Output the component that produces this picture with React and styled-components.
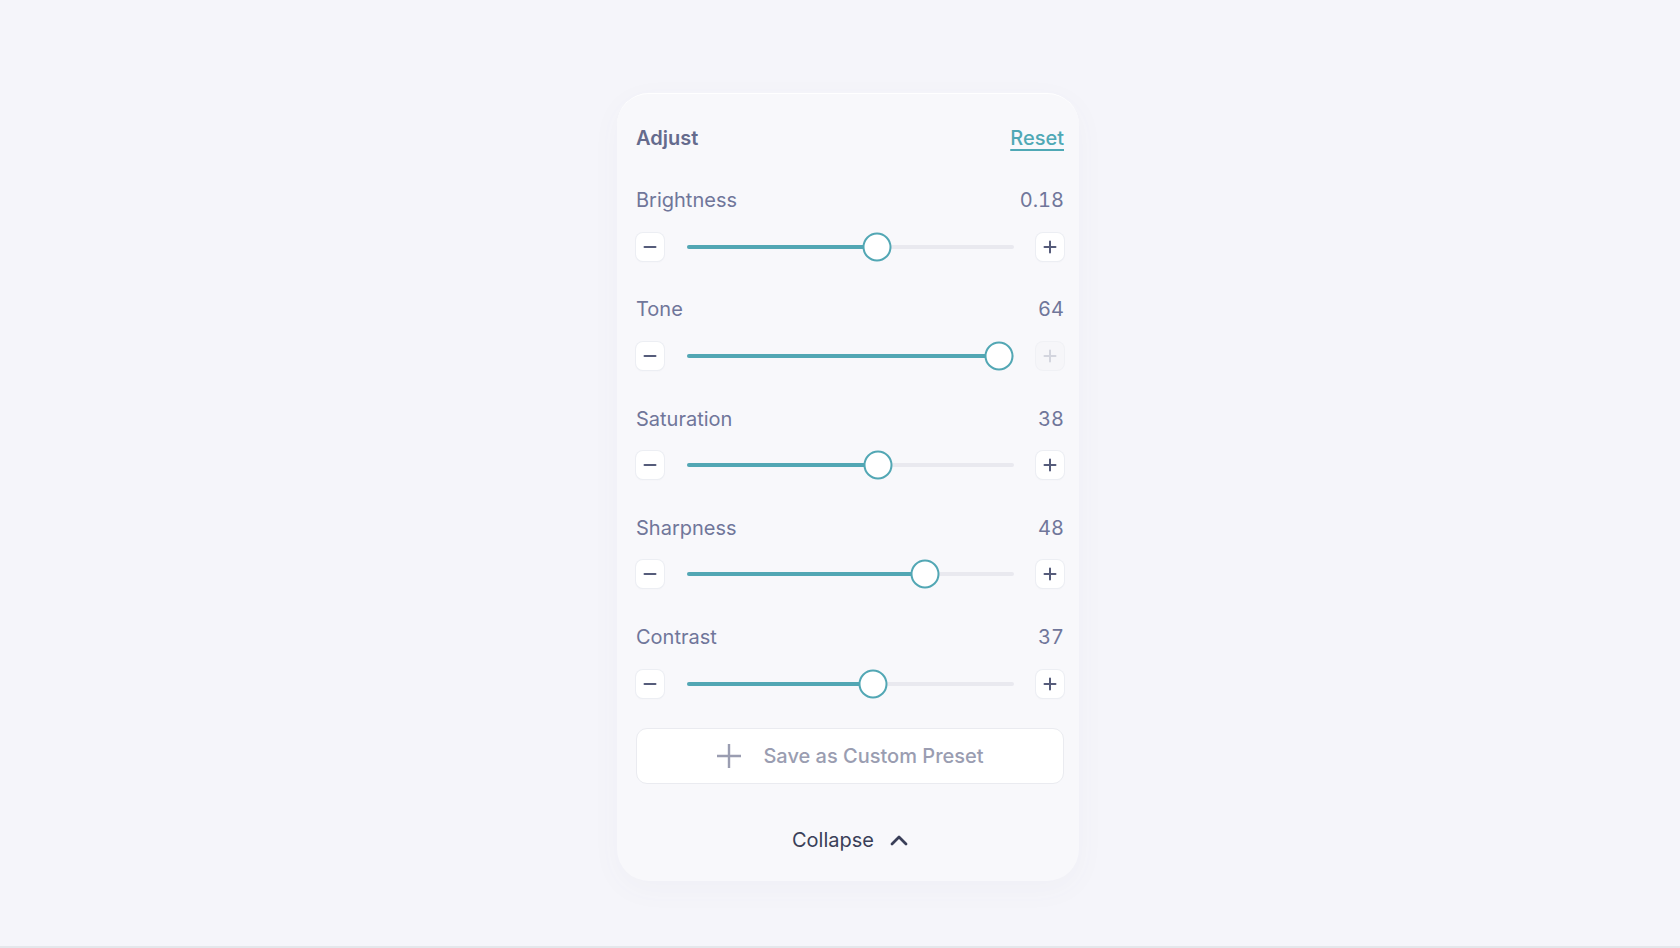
import React from "react";
import styled, { createGlobalStyle } from "styled-components";

const GlobalStyle = createGlobalStyle`
  html { background: #e4e7eb; }
  body {
    margin: 0;
    font-family: Inter, "Noto Sans", "Liberation Sans", sans-serif;
    -webkit-font-smoothing: antialiased;
  }
`;

const Page = styled.div`
  min-height: 946px;
  background: #f5f5fa;
  box-sizing: border-box;
  display: flex;
  justify-content: center;
  align-items: flex-start;
  padding: 93px 0 0 16px;
`;

const Card = styled.div`
  width: 462px;
  box-sizing: border-box;
  padding: 32px 15px 29px 19px;
  background: #f8f8fb;
  border-radius: 32px;
  border-top: 1px solid #ffffff;
  box-shadow: 0 8px 30px rgba(90, 96, 130, 0.04);
  display: flex;
  flex-direction: column;
`;

const Header = styled.div`
  display: flex;
  justify-content: space-between;
  align-items: center;
  height: 24px;
  margin-bottom: 38px;
`;

const Title = styled.div`
  font-size: 20px;
  font-weight: 600;
  color: #656b8d;
`;

const ResetLink = styled.a`
  font-size: 20px;
  font-weight: 500;
  color: #4fa8b5;
  text-decoration: underline;
  text-underline-offset: 4px;
  text-decoration-thickness: 2px;
  cursor: pointer;
`;

const Controls = styled.div`
  display: flex;
  flex-direction: column;
  gap: 36.8px;
`;

const Control = styled.div`
  display: flex;
  flex-direction: column;
  gap: 20.5px;
`;

const LabelRow = styled.div`
  display: flex;
  justify-content: space-between;
  align-items: center;
  height: 24px;
  font-size: 20px;
  color: #70769a;
`;

const Value = styled.span`
  font-variant-numeric: tabular-nums;
`;

const SliderRow = styled.div`
  display: grid;
  grid-template-columns: 28px 1fr 28px;
  column-gap: 22.5px;
  align-items: center;
  height: 28px;
`;

const StepButton = styled.button`
  width: 28px;
  height: 28px;
  padding: 0;
  border: none;
  border-radius: 7px;
  background: ${(p) => (p.disabled ? "#f6f6f9" : "#ffffff")};
  box-shadow: ${(p) =>
    p.disabled
      ? "0 0 0 1px #f0f1f5"
      : "0 0 0 1px #eceef3, 0 1px 2px rgba(60, 66, 100, 0.06)"};
  display: flex;
  align-items: center;
  justify-content: center;
  color: ${(p) => (p.disabled ? "#d3d5de" : "#555b7a")};
  cursor: ${(p) => (p.disabled ? "default" : "pointer")};
`;

const Track = styled.div`
  position: relative;
  height: 4px;
  border-radius: 2px;
  background: #e9e9ef;
`;

const Fill = styled.div`
  position: absolute;
  left: 0;
  top: 0;
  height: 4px;
  border-radius: 2px;
  background: #52a7b4;
`;

const Thumb = styled.div`
  position: absolute;
  top: 50%;
  width: 29px;
  height: 29px;
  box-sizing: border-box;
  border-radius: 50%;
  background: #ffffff;
  border: 2px solid #52a7b4;
  transform: translate(-50%, -50%);
`;

const SaveButton = styled.button`
  margin-top: 30px;
  height: 56px;
  width: 100%;
  border: 1px solid #eaebf0;
  border-radius: 11px;
  background: #ffffff;
  display: flex;
  align-items: center;
  justify-content: center;
  gap: 21px;
  font-family: inherit;
  font-size: 20px;
  font-weight: 500;
  color: #9a9db1;
  cursor: pointer;
`;

const CollapseButton = styled.button`
  margin-top: 44px;
  align-self: center;
  height: 24px;
  padding: 0;
  border: none;
  background: transparent;
  display: flex;
  align-items: center;
  gap: 16px;
  font-family: inherit;
  font-size: 20px;
  color: #3a3f58;
  cursor: pointer;
`;

const MinusIcon = () => (
  <svg width="14" height="14" viewBox="0 0 14 14">
    <path d="M1.5 7h11" stroke="currentColor" strokeWidth="2" strokeLinecap="round" />
  </svg>
);

const PlusIcon = () => (
  <svg width="14" height="14" viewBox="0 0 14 14">
    <path d="M1.5 7h11M7 1.5v11" stroke="currentColor" strokeWidth="2" strokeLinecap="round" />
  </svg>
);

const BigPlus = () => (
  <svg width="26" height="26" viewBox="0 0 26 26">
    <path d="M1 13h24M13 1v24" stroke="#9a9db1" strokeWidth="2.4" />
  </svg>
);

const ChevronUp = () => (
  <svg width="18" height="12" viewBox="0 0 18 12">
    <path d="M2 10l7-7 7 7" fill="none" stroke="#3a3f58" strokeWidth="2.8" strokeLinecap="round" strokeLinejoin="round" />
  </svg>
);

const THUMB = 29;

const Slider = ({ ratio }) => {
  const pos = `calc(${THUMB / 2}px + (100% - ${THUMB}px) * ${ratio})`;
  return (
    <Track>
      <Fill style={{ width: pos }} />
      <Thumb style={{ left: pos }} />
    </Track>
  );
};

const controls = [
  { label: "Brightness", value: "0.18", ratio: 0.59, max: false },
  { label: "Tone", value: "64", ratio: 1, max: true },
  { label: "Saturation", value: "38", ratio: 38 / 64, max: false },
  { label: "Sharpness", value: "48", ratio: 48 / 64, max: false },
  { label: "Contrast", value: "37", ratio: 37 / 64, max: false },
];

export default function App() {
  return (
    <>
      <GlobalStyle />
      <Page>
        <Card>
          <Header>
            <Title>Adjust</Title>
            <ResetLink>Reset</ResetLink>
          </Header>
          <Controls>
            {controls.map((c) => (
              <Control key={c.label}>
                <LabelRow>
                  <span>{c.label}</span>
                  <Value>{c.value}</Value>
                </LabelRow>
                <SliderRow>
                  <StepButton aria-label="decrease">
                    <MinusIcon />
                  </StepButton>
                  <Slider ratio={c.ratio} />
                  <StepButton aria-label="increase" disabled={c.max}>
                    <PlusIcon />
                  </StepButton>
                </SliderRow>
              </Control>
            ))}
          </Controls>
          <SaveButton>
            <BigPlus />
            <span>Save as Custom Preset</span>
          </SaveButton>
          <CollapseButton>
            <span>Collapse</span>
            <ChevronUp />
          </CollapseButton>
        </Card>
      </Page>
    </>
  );
}
